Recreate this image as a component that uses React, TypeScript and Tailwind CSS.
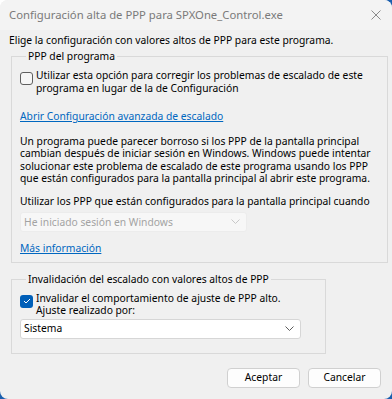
import React from "react";

const font = { fontFamily: '"Noto Sans", "Open Sans", sans-serif' };

function Chevron({ disabled }: { disabled?: boolean }) {
  return (
    <svg width="9" height="5" viewBox="0 0 9 5" fill="none">
      <path
        d="M0.5 0.5 L4.5 4.5 L8.5 0.5"
        stroke={disabled ? "#c8c8c8" : "#5c5c5c"}
        strokeWidth="1"
      />
    </svg>
  );
}

function Checkbox({ checked }: { checked?: boolean }) {
  if (checked) {
    return (
      <span className="flex h-[13px] w-[13px] shrink-0 items-center justify-center rounded-[3px] bg-[#005fb8]">
        <svg width="8" height="6" viewBox="0 0 8 6" fill="none">
          <path d="M1 3 L3 5 L7 1" stroke="#ffffff" strokeWidth="1" />
        </svg>
      </span>
    );
  }
  return (
    <span className="block h-[13px] w-[13px] shrink-0 rounded-[3px] border border-[#5f5f5f] bg-[#f6f6f6]" />
  );
}

export default function App() {
  return (
    <div
      className="h-[399px] w-[392px] bg-[linear-gradient(135deg,#ffffff_0%,#ffffff_30%,#1b5fae_40%)]"
      style={font}
    >
      <div className="flex h-full w-full flex-col overflow-hidden rounded-[8px] bg-[#f0f0f0] text-[10.3px] leading-[12.3px] text-black">
        {/* title bar */}
        <div className="flex h-[30px] shrink-0 items-center justify-between bg-[#f3f3f3] pl-[9px] pr-[11px]">
          <span className="text-[11.3px] text-[#7a7a7a]">
            Configuración alta de PPP para SPXOne_Control.exe
          </span>
          <svg width="10" height="10" viewBox="0 0 10 10" fill="none">
            <path d="M0.5 0.5 L9.5 9.5 M9.5 0.5 L0.5 9.5" stroke="#8a8a8a" strokeWidth="1" />
          </svg>
        </div>

        <div className="flex flex-1 flex-col pl-[11px] pr-[5px]">
          <p className="ml-[-2px] mt-[4px]">
            Elige la configuración con valores altos de PPP para este programa.
          </p>

          {/* group 1 */}
          <fieldset className="mt-[4px] w-[377px] border border-[#d9d9d9] pb-[8px] pl-[8px]">
            <legend className="ml-[6px] px-[2px] leading-[13px]">PPP del programa</legend>
            <div className="mt-[6px] flex items-start gap-[3px]">
              <span className="mt-[3px]">
                <Checkbox />
              </span>
              <span>
                Utilizar esta opción para corregir los problemas de escalado de este
                <br />
                programa en lugar de la de Configuración
              </span>
            </div>
            <a className="mt-[16px] block text-[#0067c0] underline">
              Abrir Configuración avanzada de escalado
            </a>
            <p className="mt-[13px]">
              Un programa puede parecer borroso si los PPP de la pantalla principal
              <br />
              cambian después de iniciar sesión en Windows. Windows puede intentar
              <br />
              solucionar este problema de escalado de este programa usando los PPP
              <br />
              que están configurados para la pantalla principal al abrir este programa.
            </p>
            <p className="mt-[11px]">
              Utilizar los PPP que están configurados para la pantalla principal cuando
            </p>
            <div className="mt-[4px] flex h-[20px] w-[227px] items-center justify-between rounded-[3px] border border-[#ececec] bg-[#f7f7f7] pl-[3px] pr-[6px] text-[#a3a3a3]">
              <span>He iniciado sesión en Windows</span>
              <Chevron disabled />
            </div>
            <a className="mt-[10px] block text-[#0067c0] underline">Más información</a>
          </fieldset>

          {/* group 2 */}
          <fieldset className="mt-[10px] w-[315px] border border-[#d9d9d9] pb-[14px] pl-[8px]">
            <legend className="ml-[6px] px-[2px] leading-[13px]">
              Invalidación del escalado con valores altos de PPP
            </legend>
            <div className="mt-[6px] flex items-start gap-[3px]">
              <span className="mt-[3px]">
                <Checkbox checked />
              </span>
              <span>
                Invalidar el comportamiento de ajuste de PPP alto.
                <br />
                Ajuste realizado por:
              </span>
            </div>
            <div className="mt-[2px] flex h-[20px] w-[281px] items-center justify-between rounded-[3px] border border-[#d6d6d6] bg-white pl-[3px] pr-[6px]">
              <span>Sistema</span>
              <Chevron />
            </div>
          </fieldset>

          {/* buttons */}
          <div className="mt-[14px] flex justify-end gap-[8px] pr-[6px]">
            <button className="h-[20px] w-[73px] rounded-[4px] border border-[#d0d0d0] bg-[#fdfdfd] text-[10.3px]">
              Aceptar
            </button>
            <button className="h-[20px] w-[73px] rounded-[4px] border border-[#d0d0d0] bg-[#fdfdfd] text-[10.3px]">
              Cancelar
            </button>
          </div>
        </div>
      </div>
    </div>
  );
}
